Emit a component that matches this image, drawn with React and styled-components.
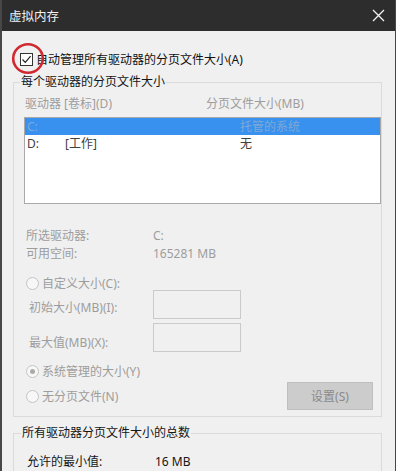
import React from "react";
import styled, { createGlobalStyle } from "styled-components";

const Global = createGlobalStyle`
  html, body { margin: 0; padding: 0; background: #f0f0f0; }
  body { font-family: "Noto Sans", "Noto Sans CJK SC", sans-serif; font-size: 12px; }
  * { box-sizing: border-box; }
`;

const Window = styled.div`
  width: 396px;
  height: 471px;
  overflow: hidden;
  background: #f0f0f0;
  border-left: 2px solid #474747;
  border-right: 1px solid #474747;
  display: flex;
  flex-direction: column;
`;

const TitleBar = styled.div`
  height: 31px;
  flex: none;
  background: #2d2d2d;
  display: flex;
  align-items: center;
  justify-content: space-between;
  padding: 0 9px 0 7px;
  color: #f2f2f2;
  font-family: "Noto Sans CJK SC", sans-serif;
  font-size: 12.5px;
`;

const CloseIcon = () => (
  <svg width="13" height="13" viewBox="0 0 13 13" style={{ display: "block", marginRight: 1 }}>
    <path d="M1 1 L12 12 M12 1 L1 12" stroke="#f2f2f2" strokeWidth="1.3" fill="none" />
  </svg>
);

const Body = styled.div`
  flex: 1;
  padding: 0 13px 0 11px;
  display: flex;
  flex-direction: column;
`;

const CheckRow = styled.div`
  position: relative;
  margin-top: 20px;
  margin-left: 7px;
  height: 16px;
  display: flex;
  align-items: center;
  gap: 3px;
  color: #111;
`;

const CheckBox = styled.span`
  width: 13px;
  height: 13px;
  border: 1px solid #333;
  background: #fff;
  display: flex;
  align-items: center;
  justify-content: center;
`;

const RedMark = styled.svg`
  position: absolute;
  left: -9px;
  top: -9px;
  pointer-events: none;
`;

const Group = styled.fieldset`
  margin: ${(p) => p.$top}px 0 0 0;
  padding: 0 0 ${(p) => p.$bottom}px 0;
  border: 1px solid #dadada;
  min-inline-size: 0;
  display: flex;
  flex-direction: column;
`;

const Legend = styled.legend`
  margin-left: ${(p) => p.$ml}px;
  padding: 0 1px;
  line-height: 16px;
  color: #151515;
  font-size: 12px;
`;

const HeaderRow = styled.div`
  margin-top: 6px;
  padding-left: 11px;
  height: 16px;
  line-height: 16px;
  display: grid;
  grid-template-columns: 181px 1fr;
  color: #9d9d9d;
`;

const ListBox = styled.div`
  margin: 5px 0 0 10px;
  height: 87px;
  border: 1px solid #a9a9a9;
  background: #fff;
`;

const ListRow = styled.div`
  height: 17px;
  line-height: 17px;
  padding-left: 2px;
  display: grid;
  grid-template-columns: 38px 175px 1fr;
  background: ${(p) => (p.$sel ? "#3891ef" : "transparent")};
  color: ${(p) => (p.$sel ? "#7fa8d6" : "#404040")};
`;

const InfoRow = styled.div`
  height: 18px;
  line-height: 18px;
  padding-left: 12px;
  display: grid;
  grid-template-columns: 127px 1fr;
  color: #9d9d9d;
  margin-top: ${(p) => p.$top || 0}px;
`;

const RadioRow = styled.div`
  height: ${(p) => p.$h || 18}px;
  margin-top: ${(p) => p.$top || 0}px;
  padding-left: 12px;
  display: flex;
  align-items: center;
  gap: 3px;
  color: #9d9d9d;
`;

const Radio = styled.span`
  width: 13px;
  height: 13px;
  border-radius: 50%;
  border: 1px solid #c4c4c4;
  background: #f7f7f7;
  display: flex;
  align-items: center;
  justify-content: center;
  &::after {
    content: "";
    width: 5px;
    height: 5px;
    border-radius: 50%;
    background: ${(p) => (p.$on ? "#ababab" : "transparent")};
  }
`;

const FieldRow = styled.div`
  height: 29px;
  margin-top: ${(p) => p.$top || 0}px;
  padding-left: 15px;
  display: grid;
  grid-template-columns: 124px 88px;
  align-items: center;
  color: #9d9d9d;
`;

const FieldLabel = styled.span`
  padding-top: ${(p) => p.$pt || 0}px;
`;

const Input = styled.div`
  height: 29px;
  border: 1px solid #cacaca;
  background: #f0f0f0;
`;

const ActionRow = styled.div`
  margin-top: 2px;
  display: flex;
  align-items: center;
  justify-content: space-between;
  padding-right: 8px;
`;

const Button = styled.div`
  width: 86px;
  height: 28px;
  background: #cccccc;
  border: 1px solid #bfbfbf;
  color: #8a8a8a;
  display: flex;
  align-items: center;
  justify-content: center;
`;

const TotalRow = styled.div`
  margin-top: 12px;
  padding-left: 13px;
  height: 18px;
  line-height: 18px;
  display: grid;
  grid-template-columns: 128px 1fr;
  color: #151515;
`;

export default function App() {
  return (
    <>
      <Global />
      <Window>
        <TitleBar>
          <span>虚拟内存</span>
          <CloseIcon />
        </TitleBar>
        <Body>
          <CheckRow>
            <CheckBox>
              <svg width="11" height="11" viewBox="0 0 11 11">
                <path d="M1.5 5.5 L4.3 8.3 L9.6 2.2" stroke="#222" strokeWidth="1.2" fill="none" />
              </svg>
            </CheckBox>
            <span>自动管理所有驱动器的分页文件大小(A)</span>
            <RedMark width="34" height="33" viewBox="0 0 34 33">
              <ellipse cx="17" cy="16.5" rx="14.8" ry="14.3" stroke="#cf2a2f" strokeWidth="2.6" fill="none" />
            </RedMark>
          </CheckRow>

          <Group $top={7} $bottom={6}>
            <Legend $ml={6}>每个驱动器的分页文件大小</Legend>
            <HeaderRow>
              <span>驱动器 [卷标](D)</span>
              <span>分页文件大小(MB)</span>
            </HeaderRow>
            <ListBox>
              <ListRow $sel>
                <span>C:</span>
                <span></span>
                <span>托管的系统</span>
              </ListRow>
              <ListRow>
                <span>D:</span>
                <span>[工作]</span>
                <span>无</span>
              </ListRow>
            </ListBox>
            <InfoRow $top={23}>
              <span>所选驱动器:</span>
              <span>C:</span>
            </InfoRow>
            <InfoRow>
              <span>可用空间:</span>
              <span>165281 MB</span>
            </InfoRow>
            <RadioRow $top={13} $h={14}>
              <Radio />
              <span>自定义大小(C):</span>
            </RadioRow>
            <FieldRow>
              <FieldLabel $pt={5}>初始大小(MB)(I):</FieldLabel>
              <Input />
            </FieldRow>
            <FieldRow $top={4}>
              <FieldLabel $pt={8}>最大值(MB)(X):</FieldLabel>
              <Input />
            </FieldRow>
            <RadioRow $top={10}>
              <Radio $on />
              <span>系统管理的大小(Y)</span>
            </RadioRow>
            <ActionRow>
              <RadioRow>
                <Radio />
                <span>无分页文件(N)</span>
              </RadioRow>
              <Button>设置(S)</Button>
            </ActionRow>
          </Group>

          <Group $top={8} $bottom={20}>
            <Legend $ml={7}>所有驱动器分页文件大小的总数</Legend>
            <TotalRow>
              <span>允许的最小值:</span>
              <span>16 MB</span>
            </TotalRow>
          </Group>
        </Body>
      </Window>
    </>
  );
}
